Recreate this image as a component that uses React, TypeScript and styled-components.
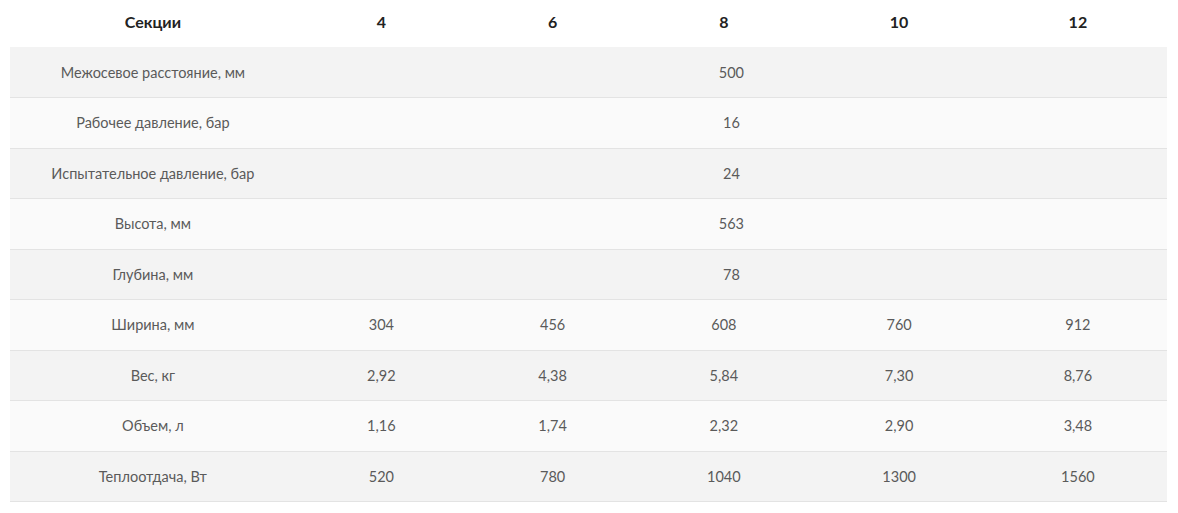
import React from 'react';
import styled, { createGlobalStyle } from 'styled-components';

const GlobalStyle = createGlobalStyle`
  html, body {
    margin: 0;
    padding: 0;
    background: #ffffff;
  }
  body {
    font-family: Lato, "Open Sans", "Liberation Sans", sans-serif;
  }
`;

const Wrapper = styled.div`
  padding: 0 11px 0 10px;
`;

const Table = styled.table`
  width: 100%;
  border-collapse: collapse;
  table-layout: fixed;
`;

const Col = styled.col<{ $w: number }>`
  width: ${(p) => p.$w}%;
`;

const HeadCell = styled.th`
  box-sizing: border-box;
  height: 47px;
  padding: 0 0 4px;
  font-size: 16px;
  font-weight: 700;
  color: #222;
  text-align: center;
  vertical-align: middle;
  background: #fff;
`;

const Row = styled.tr<{ $odd: boolean }>`
  background: ${(p) => (p.$odd ? '#f3f3f3' : '#fafafa')};
  border-bottom: 1px solid #e3e3e3;
`;

const Cell = styled.td`
  height: 50.5px;
  box-sizing: border-box;
  padding: 0;
  font-size: 14.5px;
  color: #5a5a5a;
  text-align: center;
  vertical-align: middle;
`;

const colWidths = [24.7, 14.8, 14.8, 14.8, 15.5, 15.4];
const columns = ['4', '6', '8', '10', '12'];

type Spec = { label: string; values: string[] };

const specs: Spec[] = [
  { label: 'Межосевое расстояние, мм', values: ['500'] },
  { label: 'Рабочее давление, бар', values: ['16'] },
  { label: 'Испытательное давление, бар', values: ['24'] },
  { label: 'Высота, мм', values: ['563'] },
  { label: 'Глубина, мм', values: ['78'] },
  { label: 'Ширина, мм', values: ['304', '456', '608', '760', '912'] },
  { label: 'Вес, кг', values: ['2,92', '4,38', '5,84', '7,30', '8,76'] },
  { label: 'Объем, л', values: ['1,16', '1,74', '2,32', '2,90', '3,48'] },
  { label: 'Теплоотдача, Вт', values: ['520', '780', '1040', '1300', '1560'] },
];

const App: React.FC = () => {
  return (
    <Wrapper>
      <GlobalStyle />
      <Table>
        <colgroup>
          {colWidths.map((w, i) => (
            <Col key={i} $w={w} />
          ))}
        </colgroup>
        <thead>
          <tr>
            <HeadCell>Секции</HeadCell>
            {columns.map((c) => (
              <HeadCell key={c}>{c}</HeadCell>
            ))}
          </tr>
        </thead>
        <tbody>
          {specs.map((s, i) => (
            <Row key={s.label} $odd={i % 2 === 0}>
              <Cell>{s.label}</Cell>
              {s.values.length === 1 ? (
                <Cell colSpan={5}>{s.values[0]}</Cell>
              ) : (
                s.values.map((v, j) => <Cell key={j}>{v}</Cell>)
              )}
            </Row>
          ))}
        </tbody>
      </Table>
    </Wrapper>
  );
};

export default App;
